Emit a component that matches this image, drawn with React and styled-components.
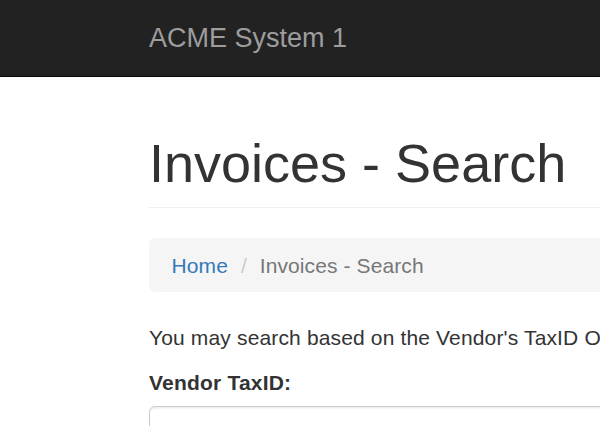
import React from "react";
import styled, { createGlobalStyle } from "styled-components";

const Global = createGlobalStyle`
  html, body { margin: 0; padding: 0; background: #fff; overflow: hidden; }
  body {
    font-family: "Liberation Sans", Arial, Helvetica, sans-serif;
    font-size: 21px;
    line-height: 30px;
    color: #333;
  }
  * { box-sizing: border-box; }
`;

const Navbar = styled.nav`
  height: 76.5px;
  background: #222;
  border-bottom: 1.5px solid #080808;
  margin-bottom: 30px;
  width: 1200px;
`;

const NavContainer = styled.div`
  padding-left: 126.5px;
  display: flex;
`;

const Brand = styled.a`
  display: block;
  height: 75px;
  padding: 22.5px;
  font-size: 27px;
  line-height: 30px;
  color: #9d9d9d;
  text-decoration: none;
`;

const Container = styled.main`
  padding-left: 149px;
  width: 1400px;
`;

const PageHeader = styled.div`
  margin-top: 57.5px;
  margin-bottom: 30px;
  padding-bottom: 13.5px;
  border-bottom: 1.5px solid #eee;
`;

const Title = styled.h1`
  margin: 0;
  font-size: 54px;
  line-height: 59.4px;
  font-weight: 500;
  color: #333;
`;

const Breadcrumb = styled.ol`
  list-style: none;
  margin: 0 0 30px;
  padding: 13px 22.5px 11px;
  height: 54px;
  background: #f5f5f5;
  border-radius: 6px;
  display: flex;
  font-size: 21px;
  line-height: 30px;
`;

const Crumb = styled.li`
  color: ${(p) => (p.$active ? "#777" : "#337ab7")};
  letter-spacing: 0.1px;
`;

const Separator = styled.li`
  color: #ccc;
  padding: 0 13px 0 13px;
`;

const CrumbLink = styled.a`
  color: #337ab7;
  text-decoration: none;
`;

const Paragraph = styled.p`
  margin: 0 0 15px;
  padding-top: 1.5px;
  white-space: nowrap;
  letter-spacing: 0.15px;
`;

const Label = styled.label`
  display: block;
  font-weight: 700;
  margin-bottom: 8px;
  letter-spacing: 0.2px;
`;

const Input = styled.input`
  display: block;
  width: 1200px;
  height: 51px;
  padding: 9px 18px;
  font-size: 21px;
  font-family: inherit;
  color: #555;
  background: #fff;
  border: 1.5px solid #ccc;
  border-radius: 6px;
  box-shadow: inset 0 1.5px 1.5px rgba(0, 0, 0, 0.075);
  outline: none;
`;

export default function App() {
  return (
    <>
      <Global />
      <Navbar>
        <NavContainer>
          <Brand href="#">ACME System 1</Brand>
        </NavContainer>
      </Navbar>
      <Container>
        <PageHeader>
          <Title>Invoices - Search</Title>
        </PageHeader>
        <Breadcrumb>
          <Crumb>
            <CrumbLink href="#">Home</CrumbLink>
          </Crumb>
          <Separator aria-hidden="true">/</Separator>
          <Crumb $active>Invoices - Search</Crumb>
        </Breadcrumb>
        <Paragraph>
          You may search based on the Vendor's TaxID OR the Invoice Number.
        </Paragraph>
        <Label htmlFor="taxid">Vendor TaxID:</Label>
        <Input id="taxid" type="text" />
      </Container>
    </>
  );
}
